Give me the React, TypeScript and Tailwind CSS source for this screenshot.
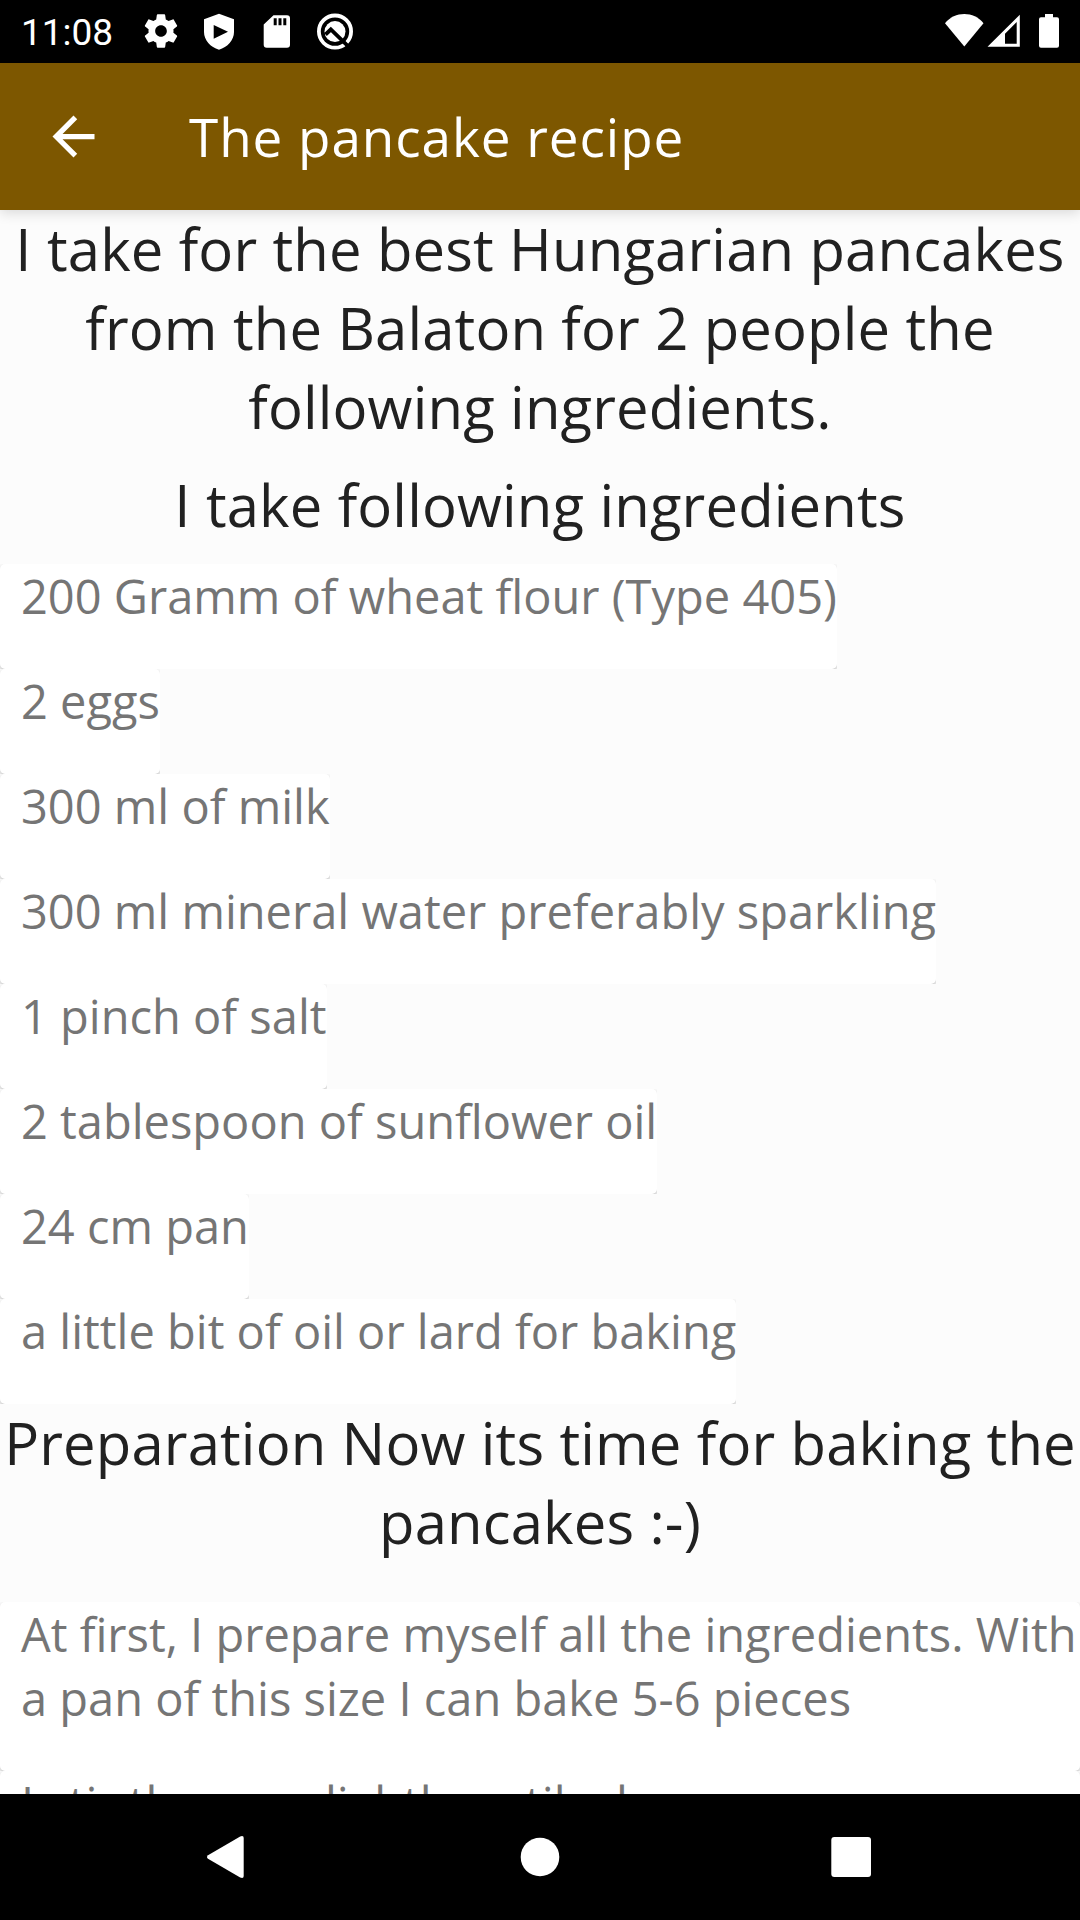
import type { ReactNode } from "react";

const ingredients = [
  "200 Gramm of wheat flour (Type 405)",
  "2 eggs",
  "300 ml of milk",
  "300 ml mineral water preferably sparkling",
  "1 pinch of salt",
  "2 tablespoon of sunflower oil",
  "24 cm pan",
  "a little bit of oil or lard for baking",
];

const steps = [
  "At first, I prepare myself all the ingredients. With a pan of this size I can bake 5-6 pieces",
  "I stir the eggs lightly until a homogeneous mass",
];

function StatusBar() {
  return (
    <header className="flex h-[63px] shrink-0 items-start bg-black pl-[21px] pr-[11px] text-white">
      <span className="mt-[11px] w-[120px] font-['Roboto',sans-serif] text-[37px] leading-[44px]">11:08</span>
      <div className="mt-[11px] flex gap-[18px]">
        <svg width="40" height="40" viewBox="0 0 24 24" fill="currentColor">
          <path d="M19.43 12.98c.04-.32.07-.64.07-.98s-.03-.66-.07-.98l2.11-1.65c.19-.15.24-.42.12-.64l-2-3.46c-.12-.22-.39-.3-.61-.22l-2.49 1c-.52-.4-1.08-.73-1.69-.98l-.38-2.65C14.46 2.18 14.25 2 14 2h-4c-.25 0-.46.18-.49.42l-.38 2.65c-.61.25-1.17.59-1.69.98l-2.49-1c-.23-.09-.49 0-.61.22l-2 3.46c-.13.22-.07.49.12.64l2.11 1.65c-.04.32-.07.65-.07.98s.03.66.07.98l-2.11 1.65c-.19.15-.24.42-.12.64l2 3.46c.12.22.39.3.61.22l2.49-1c.52.4 1.08.73 1.69.98l.38 2.65c.03.24.24.42.49.42h4c.25 0 .46-.18.49-.42l.38-2.65c.61-.25 1.17-.59 1.69-.98l2.49 1c.23.09.49 0 .61-.22l2-3.46c.12-.22.07-.49-.12-.64l-2.11-1.65zM12 15.5c-1.93 0-3.5-1.57-3.5-3.5s1.57-3.5 3.5-3.5 3.5 1.57 3.5 3.5-1.57 3.5-3.5 3.5z" />
        </svg>
        <svg width="40" height="40" viewBox="0 0 40 40" fill="currentColor">
          <path fillRule="evenodd" d="M20 2.7 35 8.3V21c0 8-6.5 15.3-15 17.7C11.5 36.3 5 29 5 21V8.3ZM14.7 14v13.7L29 20.8Z" />
        </svg>
        <svg width="40" height="40" viewBox="0 0 40 40" fill="currentColor">
          <path fillRule="evenodd" d="M16.5 4.3H30a3 3 0 0 1 3 3v26.4a3 3 0 0 1-3 3H9.7a3 3 0 0 1-3-3V13.5ZM16.7 7.3v7h3v-7ZM21.5 7.3v7h3v-7ZM26.3 7.3v7h3v-7Z" />
        </svg>
        <svg width="40" height="40" viewBox="0 0 40 40" fill="none">
          <circle cx="20" cy="20.6" r="16.1" stroke="white" strokeWidth="3.8" />
          <circle cx="20" cy="20.6" r="10.5" fill="white" />
          <path d="M10.5 23.5 15.8 18.5 33 35.2" stroke="black" strokeWidth="3.8" />
        </svg>
      </div>
      <div className="ml-auto mt-[11px] flex">
        <svg width="40" height="40" viewBox="0 0 40 40" fill="currentColor">
          <path d="M1 12.3C6 6 13 3 20.3 3s14.3 3 19.2 9.3L20.3 35.5Z" />
        </svg>
        <svg width="40" height="40" viewBox="0 0 40 40" fill="currentColor">
          <path fillRule="evenodd" d="M3.5 35.7h32.3V3.7ZM21 32.7V22.7L32.7 11v21.7Z" />
        </svg>
        <svg className="ml-[5px]" width="40" height="40" viewBox="0 0 40 40" fill="currentColor">
          <path d="M16 3h8v3.2h4a2 2 0 0 1 2 2v26.5a2 2 0 0 1-2 2H12a2 2 0 0 1-2-2V8.2a2 2 0 0 1 2-2h4Z" />
        </svg>
      </div>
    </header>
  );
}

function Toolbar() {
  return (
    <div className="relative z-10 flex h-[147px] shrink-0 items-center bg-[#7d5700] pl-[42px] text-white shadow-[0_3px_12px_rgba(0,0,0,0.14)]">
      <svg width="63" height="63" viewBox="0 0 24 24" fill="currentColor">
        <path d="M20 11H7.83l5.59-5.59L12 4l-8 8 8 8 1.41-1.41L7.83 13H20v-2z" />
      </svg>
      <h1 className="ml-[84px] text-[53px] leading-[72px] tracking-[0.95px]">The pancake recipe</h1>
    </div>
  );
}

function Heading({ children }: { children: ReactNode }) {
  return <h2 className="text-center text-[58px] leading-[79px] tracking-[0.15px] text-[#212121]">{children}</h2>;
}

function Card({ children }: { children: ReactNode }) {
  return (
    <li className="overflow-hidden">
      <div className="rounded-[5px] bg-white pb-[41px] pl-[21px] text-[47px] leading-[64px] text-[#757575] shadow-[0_2px_4px_rgba(0,0,0,0.25)]">
        {children}
      </div>
    </li>
  );
}

function NavBar() {
  return (
    <nav className="flex h-[126px] shrink-0 items-center gap-[267px] bg-black pl-[201px]">
      <svg width="48" height="48" viewBox="0 0 48 48" fill="white">
        <path d="M7 22.2 39.2 3.4Q42.7 2 42.7 5V43Q42.7 46 39.2 44.6L7 25.8Q5 24 7 22.2Z" />
      </svg>
      <svg width="48" height="48" viewBox="0 0 48 48" fill="white">
        <circle cx="24" cy="24" r="19.3" />
      </svg>
      <svg width="48" height="48" viewBox="0 0 48 48" fill="white">
        <rect x="0.3" y="4" width="39.7" height="40" rx="3" />
      </svg>
    </nav>
  );
}

export default function App() {
  return (
    <div className="flex h-[1920px] w-[1080px] flex-col overflow-hidden bg-[#fcfcfc] font-['Open_Sans',sans-serif]">
      <StatusBar />
      <Toolbar />
      <main className="-mt-px min-h-0 flex-1 overflow-hidden">
        <Heading>I take for the best Hungarian pancakes from the Balaton for 2 people the following ingredients.</Heading>
        <div className="mb-5 mt-[19px]">
          <Heading>I take following ingredients</Heading>
        </div>
        <ul className="flex flex-col items-start">
          {ingredients.map((item) => (
            <Card key={item}>{item}</Card>
          ))}
        </ul>
        <div className="-mt-px mb-[41px]">
          <Heading>Preparation Now its time for baking the pancakes :-)</Heading>
        </div>
        <ul className="flex flex-col">
          {steps.map((step) => (
            <Card key={step}>{step}</Card>
          ))}
        </ul>
      </main>
      <NavBar />
    </div>
  );
}
